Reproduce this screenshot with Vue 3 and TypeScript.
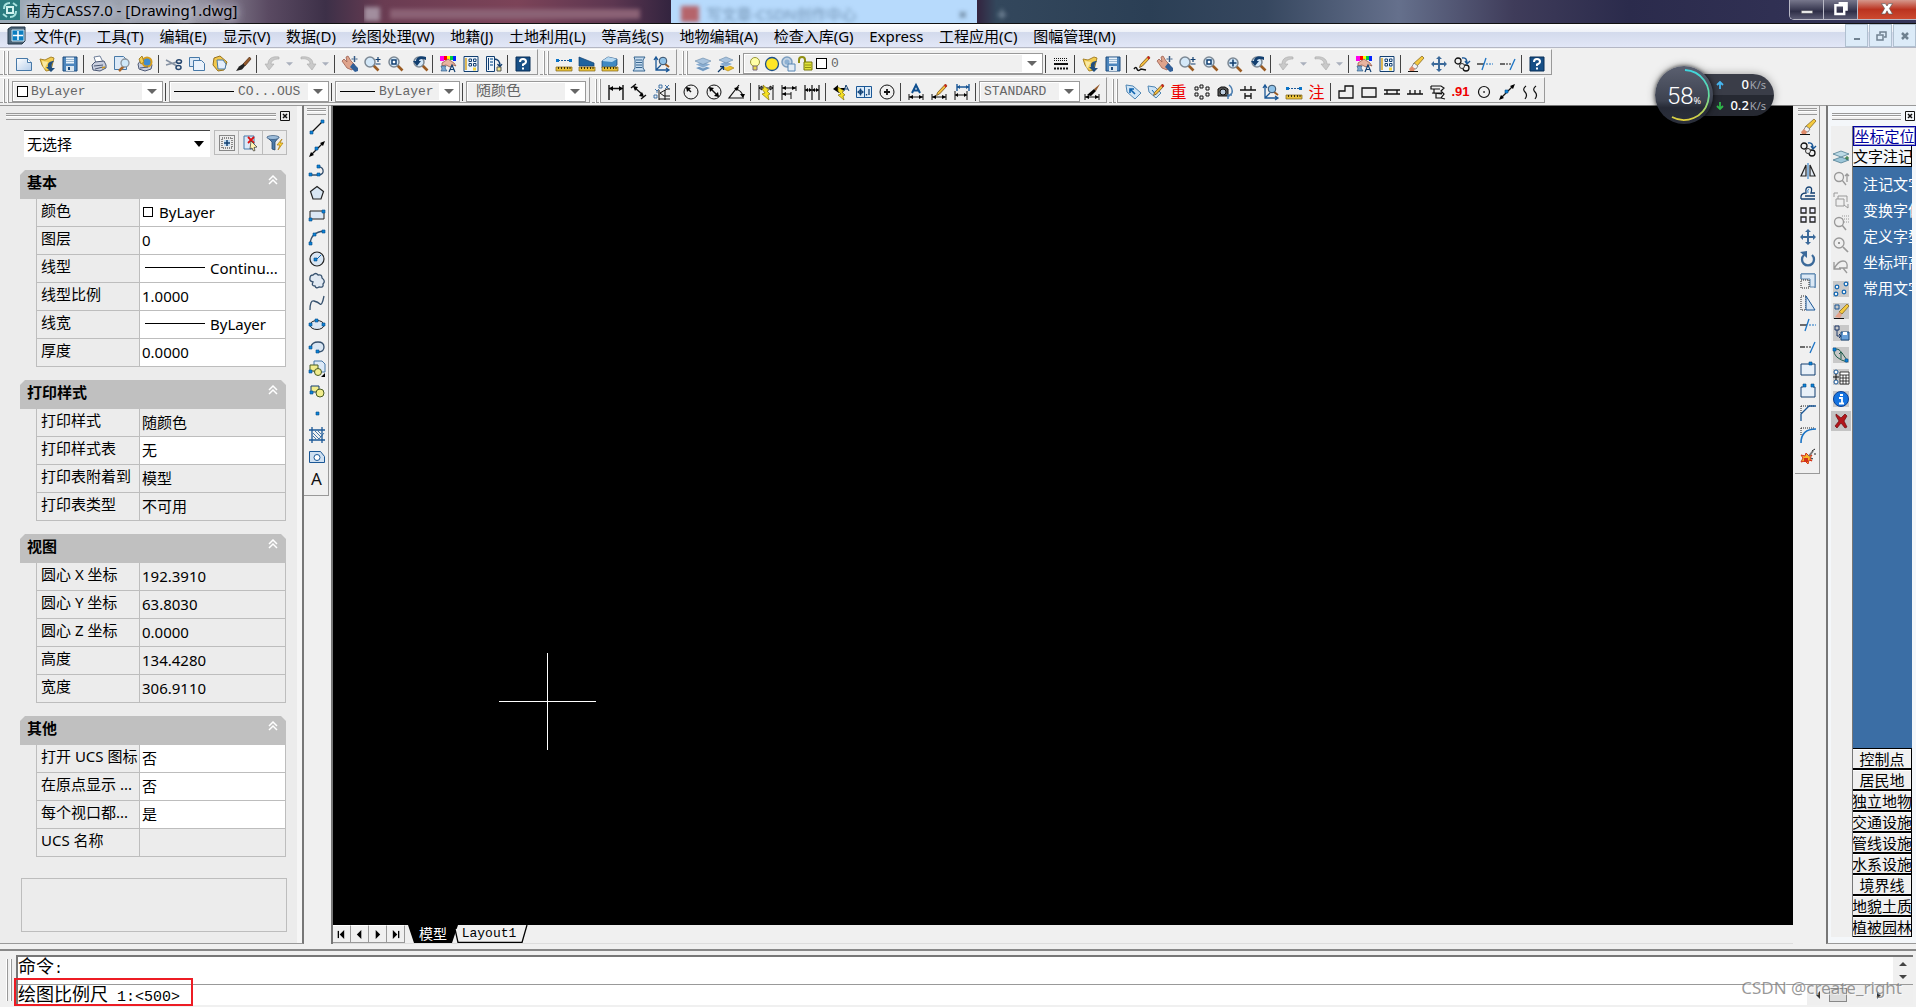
<script setup lang="ts">
import { ref } from 'vue'

interface Field { label: string; value: string; white?: boolean; mark?: 'box' | 'line' }
interface Section { title: string; fields: Field[] }
interface Combo { value: string; kind: string; options: string[] }

const menus = ['文件(F)', '工具(T)', '编辑(E)', '显示(V)', '数据(D)', '绘图处理(W)', '地籍(J)', '土地利用(L)', '等高线(S)', '地物编辑(A)', '检查入库(G)', 'Express', '工程应用(C)', '图幅管理(M)']

const combos: Record<string, Combo> = {
  layer: { value: '0', kind: 'layer', options: ['0'] },
  color: { value: 'ByLayer', kind: 'box', options: ['ByLayer', 'ByBlock'] },
  ltype: { value: 'CO...OUS', kind: 'long', options: ['CO...OUS', 'ByLayer'] },
  lweight: { value: 'ByLayer', kind: 'short', options: ['ByLayer', 'ByBlock'] },
  plot: { value: '随颜色', kind: 'plain', options: ['随颜色'] },
  dim: { value: 'STANDARD', kind: 'text', options: ['STANDARD'] },
}

const split = (s: string) => s.split(' ')
const toolbars = [
  [
    split('new open save | print preview publish | cut copy paste brush | undo v redo v | pan zoomrt zoomwin zoomprev | props dcenter palettes | help'),
    split('dist area region | list locate'),
    split('layers layerprev | @layer | lines | open save | pencil pan zoomrt zoomwin zoomall zoomprev | undo v redo v | props dcenter | erase move copyobj trim extend | help'),
  ],
  [
    split('@color | @ltype | @lweight | @plot'),
    split('dimlin dimali dimord | dimrad dimdia dimang | dimquick dimbase dimcont | leader tol center | dimtext dimedit dimupd | @dim dimstyle'),
    split('tag tagedit zhong ring camera tee locate dist zhu | poly rect rails comb scarp point91 circle seg squig'),
  ],
]

const drawTools = split('line xline pline polygon rectdot arc circ cloud spline ellipse earc insert block dot hatch regionbox mtext')
const editTools = split('erase copyobj mirror offset array move rotate scale stretch trim extend break1 break2 chamfer fillet explode')
const sideTools = split('g-layers g-zoom g-swap g-grid g-find g-back s-nodes s-erase s-save s-curve s-table info close')

const sections = ref<Section[]>([
  {
    title: '基本',
    fields: [
      { label: '颜色', value: 'ByLayer', white: true, mark: 'box' },
      { label: '图层', value: '0', white: true },
      { label: '线型', value: 'Continu...', white: true, mark: 'line' },
      { label: '线型比例', value: '1.0000', white: true },
      { label: '线宽', value: 'ByLayer', white: true, mark: 'line' },
      { label: '厚度', value: '0.0000', white: true },
    ],
  },
  {
    title: '打印样式',
    fields: [
      { label: '打印样式', value: '随颜色' },
      { label: '打印样式表', value: '无', white: true },
      { label: '打印表附着到', value: '模型' },
      { label: '打印表类型', value: '不可用' },
    ],
  },
  {
    title: '视图',
    fields: [
      { label: '圆心 X 坐标', value: '192.3910' },
      { label: '圆心 Y 坐标', value: '63.8030' },
      { label: '圆心 Z 坐标', value: '0.0000' },
      { label: '高度', value: '134.4280' },
      { label: '宽度', value: '306.9110' },
    ],
  },
  {
    title: '其他',
    fields: [
      { label: '打开 UCS 图标', value: '否', white: true },
      { label: '在原点显示 ...', value: '否', white: true },
      { label: '每个视口都...', value: '是', white: true },
      { label: 'UCS 名称', value: '' },
    ],
  },
])

const paletteItems = ['注记文字', '变换字体', '定义字型', '坐标坪高', '常用文字']
const paletteGroups = ['控制点', '居民地', '独立地物', '交通设施', '管线设施', '水系设施', '境界线', '地貌土质', '植被园林']

const K = 'fill="none" stroke="#111"'
const B = 'fill="none" stroke="#1a5796"'
const sq = (x: number, y: number) => `<path d="M${x} ${y}h3v3h-3z" fill="#0a84d8" stroke="#064a86" stroke-width=".6"/>`
const lens = (cx = 6, cy = 6) => `<path d="M${cx + 3} ${cy + 3}l5.500 5.500" stroke="#9a5b22" stroke-width="2.600"/><circle cx="${cx}" cy="${cy}" r="5" fill="#d4e8f8" stroke="#7c8894" stroke-width="1.500"/>`
const ruler = '<path d="M0 11h16v4H0z" fill="#e9c23a" stroke="#80611a" stroke-width=".7"/><path d="M2.500 11v2M5.500 11v2M8.500 11v2M11.500 11v2M14 11v2" stroke="#3a2c08"/>'
const pen = '<path d="M14.500 0L16 2l-7.500 8-3 1.500 1-3z" fill="#f3bd3c" stroke="#73501a" stroke-width=".8"/><path d="M13 1.500L14.500 0 16 2l-1.500 1.500z" fill="#c22"/>'
const grid = (x: number) => `<path d="M${x} .5h14v15h-14z" fill="#eef5fc" stroke="#123f70"/><path d="M${x + 2} 2v12" stroke="#d9a520" stroke-width="1.500"/><path d="M${x + 5} 3h2.500v2.500h-2.500zM${x + 9.500} 3h2.500v2.500h-2.500zM${x + 5} 7.500h2.500v2.500h-2.500zM${x + 9.500} 7.500h2.500v2.500h-2.500z" fill="none" stroke="#123f70"/><path d="M${x + 9} 11.500h3v3h-3z" fill="#f3d23c"/>`
const plate = '<path d="M0 0h16v16H0z" fill="#c8c8c8"/>'

const icons: Record<string, string> = {
  new: '<defs><linearGradient id="pg" x2="1" y2="1"><stop stop-color="#fff"/><stop offset="1" stop-color="#b4cdea"/></linearGradient></defs><path d="M.5 2.500h11l4 4v8H.5z" fill="url(#pg)" stroke="#4779a8"/><path d="M11.500 2.500v4h4" fill="#fff" stroke="#4779a8"/>',
  open: '<path d="M1 3l5 1 6-3 3 1-3 12-5 1L3 9z" fill="#f2cc50" stroke="#a8842a"/><path d="M3 5l6 1-4 7z" fill="#f9e9a3"/><path d="M15 5c-4 0-7 2-6 6H7l5 5 4-4h-3c-1-3 0-5 2-7z" fill="#214f7e"/>',
  save: '<path d="M1 1h14v14H1z" fill="#4d86bd" stroke="#1c4b7c"/><path d="M4 1.500h8v6H4z" fill="#eaf3fb"/><path d="M4 3.500h8M4 5.500h8" stroke="#9db9d2"/><path d="M4 10h8v5H4z" fill="#dbe6ef"/><path d="M6 11h2v3H6z" fill="#1c4b7c"/>',
  print: '<path d="M3 1l6-1 3 6-7 1z" fill="#fff" stroke="#6f7f9a"/><path d="M1 9l3-3 9-1 2 4v3l-6 3-7-1z" fill="#c9cfdf" stroke="#4b5874"/><path d="M3 10l9-1M4 13l8-2" stroke="#4b5874"/><path d="M11 12l3-1" stroke="#c92" stroke-width="1.500"/>',
  preview: '<path d="M.5.500h9l3 3v10H.5z" fill="#dce9f7" stroke="#4779a8"/><path d="M10 10l-5 5" stroke="#a8662a" stroke-width="2.500"/><circle cx="11" cy="7" r="4" fill="#cfe8f8" stroke="#8a939c" stroke-width="1.300"/>',
  publish: '<path d="M1 8l3-4 8-1 3 6-1 4-6 2-6-2z" fill="#c9cfdf" stroke="#4b5874"/><circle cx="10" cy="6" r="4.500" fill="#3d8bd0" stroke="#d79d1c" stroke-width="2"/><path d="M2 3l3-3 2 6-3 2z" fill="#f2cc50" stroke="#a8842a"/><path d="M3 12l8-1" stroke="#4b5874"/>',
  cut: '<path d="M0 4l11 6M0 9l11-3" stroke="#8591a2" stroke-width="1.500"/><ellipse cx="13" cy="5.500" rx="2.500" ry="1.800" fill="none" stroke="#26466e" stroke-width="1.500"/><ellipse cx="12.500" cy="11.500" rx="2.500" ry="2" fill="none" stroke="#26466e" stroke-width="1.500"/>',
  copy: '<path d="M.5 1.500h10v9H.5z" fill="#dce9f7" stroke="#4779a8"/><path d="M4.500 4.500h8l3 3v7h-11z" fill="#eaf2fb" stroke="#4779a8"/>',
  paste: '<path d="M2 2l6-2 7 6-3 8-6 1-5-6z" fill="#f1c84c" stroke="#96701c"/><path d="M5 4h6l3 4-1 5H6z" fill="#e4eefb" stroke="#4779a8"/>',
  brush: '<path d="M14.500 1L8 8l2 2 6-7z" fill="#93592b" stroke="#4a2a12" stroke-width=".7"/><path d="M8.500 7.500L4 10.500 1 15l6-1.500 3-3.500z" fill="#222"/>',
  pencil: '<path d="M0 13q2-3 3 0t4 0l5 1" fill="none" stroke="#111" stroke-width="1.500"/>' + pen,
  undo: '<path d="M15 1C9 0 4 2 4 8H1l4 6 5-6H7c0-3 3-5 8-5z" fill="#c9c9c9" stroke="#aaa" stroke-width=".6"/>',
  redo: '<path d="M1 3c5-1 9 1 9 5H7l5 6 4-6h-3C13 2 7 0 1 1z" fill="#c9c9c9" stroke="#aaa" stroke-width=".6"/>',
  pan: '<path d="M0 5l2-2 3 3-1-5 2-1 3 5 4 4-3 5-5-2z" fill="#dfa48c" stroke="#9d5f50" stroke-width=".8"/><path d="M8 11l3-4 5 5v3l-3 1z" fill="#315f98"/><path d="M12.500 0v6M9.500 3h6M11.500 1h2M11.500 5h2" stroke="#2a527f" stroke-width=".9"/>',
  zoomrt: lens(5, 6) + '<path d="M13 1v5M10.500 3.500h5M10.500 8h5" stroke="#123f70" stroke-width="1.200"/>',
  zoomwin: lens() + '<path d="M4 4h4v4H4z" fill="#fff" stroke="#123f70" stroke-width="1.500"/>',
  zoomall: lens(7, 7) + '<path d="M7 3.500v7M3.500 7h7" stroke="#123f70" stroke-width="1.600"/>',
  zoomprev: lens(8, 6) + '<path d="M15 1C10-1 5 1 5 5H2l4 5 4-5H8c0-2 3-3 7-1z" fill="#123f70"/>',
  props: '<path d="M0 0h4v5H0z" fill="#f0e"/><path d="M4 0h3v4H4z" fill="#f00"/><path d="M7 0h3v3H7z" fill="#ff0"/><path d="M10 0h3v4h-3z" fill="#0c4"/><path d="M13 0h3v5h-3z" fill="#02f"/><path d="M2 7l6-4 6 4 2 3-3-1-3 2-4-2-4 1z" fill="#e8b4a0" stroke="#8a4a3a" stroke-width=".7"/><path d="M1 10h5l-1 2 2 3H1l1-2z" fill="#7ba9d2" stroke="#26517c" stroke-width=".6"/><path d="M9 16l3-7 3 7M10 13.500h4" fill="none" stroke="#123f70" stroke-width="1.200"/>',
  dcenter: grid(1),
  palettes: '<path d="M.5.500h8v15h-8z" fill="#eef5fc" stroke="#123f70"/><path d="M2.500 2v12" stroke="#123f70"/><path d="M4 3h3M4 6h3M4 9h3" stroke="#4779a8" stroke-width="1.500"/><path d="M8 3q6 0 6 7M11.500 8l2.500 3 2-3" fill="none" stroke="#123f70" stroke-width="1.300"/><path d="M11 11h4v4h-4z" fill="#f3e98c" stroke="#555"/>',
  help: '<path d="M1 1h14v14H1z" fill="#174f86" stroke="#092f57"/><path d="M5 6q0-3 3-3t3 2.500q0 2-3 3v1.500M8 11.500v2" fill="none" stroke="#fff" stroke-width="2"/>',
  dist: '<path d="M2 4.500h12" stroke="#1a5796" stroke-dasharray="2 1"/><path d="M0 3h3v3H0zM13 3h3v3h-3z" fill="#0a74c8"/>' + ruler,
  area: '<path d="M0 1l15 6v3H0z" fill="#1d639e" stroke="#123f70" stroke-width=".7"/>' + ruler,
  region: '<path d="M0 5l6-4 9 2v6l-4 3H0z" fill="#4089c2" stroke="#123f70" stroke-width=".7"/><path d="M0 5l6-4 9 2-5 3z" fill="#b6d9f2"/>' + ruler,
  list: '<path d="M3 1h11l-2 3v8l2 3H2l2-3V4z" fill="#c6dcef" stroke="#37658f"/><path d="M5 4h6M5 6.500h6M5 9h6M5 11.500h6" stroke="#37658f"/>',
  locate: '<path d="M2 1v13h13M0 4l2-3 2 3M12 12l3 2-3 2M2 14l5-5" fill="none" stroke="#1a5796" stroke-width="1.300"/><path d="M11 8l4 3" stroke="#9a5b22" stroke-width="2"/><circle cx="9" cy="5" r="3.800" fill="#8fc2e8" stroke="#344c66"/>',
  layers: '<path d="M0 12l8-3 8 3-8 3.500z" fill="#6f97bf" stroke="#fff" stroke-width=".6"/><path d="M0 8.500l8-3 8 3-8 3.500z" fill="#88acd0" stroke="#fff" stroke-width=".6"/><path d="M0 5l8-3 8 3-8 3.500z" fill="#a8c3de" stroke="#6788a8" stroke-width=".6"/>',
  layerprev: '<path d="M4 12l6-3 6 3-6 3z" fill="#f0c32c" stroke="#a27c10" stroke-width=".6"/><path d="M1 8l7-3 7 3-7 3z" fill="#88acd0" stroke="#fff" stroke-width=".6"/><path d="M1 4l7-3 7 3-7 3z" fill="#a8c3de" stroke="#6788a8" stroke-width=".6"/><path d="M0 16l5-5M2 10.500h3.500V14" fill="none" stroke="#0b3767" stroke-width="1.300"/>',
  lines: '<path d="M1 2.500h14M1 4.500h14" stroke="#111" stroke-dasharray="1 1"/><path d="M1 8h14" stroke="#111" stroke-width="2"/><path d="M1 12.500h14" stroke="#111" stroke-width="2" stroke-dasharray="2 1"/>',
  bulb: '<circle cx="8" cy="6" r="4.500" fill="#ffffa8" stroke="#999536"/><path d="M6 10h4v4H6z" fill="#e8d84a" stroke="#767"/>',
  sun: '<circle cx="8" cy="8" r="6.500" fill="#ffe626" stroke="#1d4f88" stroke-width="1.300"/>',
  sungray: '<circle cx="6" cy="6" r="5" fill="#c2d3e4" stroke="#7b9dbf" stroke-width="1.500"/><circle cx="6" cy="6" r="2.500" fill="#8db0d2"/><path d="M7 8h7v7H7z" fill="#e3ecf5" stroke="#5887b5"/>',
  lock: '<path d="M1 7V4q0-3 3-3t3 3v4" fill="none" stroke="#8f8e12" stroke-width="2"/><path d="M6 6h8v8H6z" fill="#dfe23a" stroke="#76760e"/><path d="M7 9h6M7 11.500h6" stroke="#8f8e12"/>',
  dimlin: `<path d="M1 1v15M15 1v15M1 4.500h14" ${K} stroke-width="1.400"/><path d="M5 2v5L1 4.500zM11 2v5l4-2.500z"/>`,
  dimali: `<path d="M0 4l5-4M10 15l5-4M3 3l9 8" ${K} stroke-width="1.400"/><path d="M2 2l5 1-3 4zM13 13l-5-1 3-4z"/>`,
  dimord: `<path d="M5 16V6M11 16V6M5 15h11M6 9l7-4h3M6 9l4 3h6" ${K}/><path d="M1 5l2 2 2-2M3 7v2M11 1l4 4M15 1l-4 4M5 1h3v3H5zM0 11h3v3H0z" ${B} stroke-width=".8"/>`,
  dimrad: `<circle cx="8" cy="8" r="7" ${K}/><path d="M8 8L4 4" ${K} stroke-width="1.500"/><path d="M3 3l5 1-4 4z"/>`,
  dimdia: `<circle cx="8" cy="8" r="7" ${K}/><path d="M4 4l8 8" ${K} stroke-width="1.500"/><path d="M3 3l5 1-4 4zM13 13l-5-1 4-4z"/>`,
  dimang: `<path d="M10 1L0 14h15M6 5q7 1 8 8" ${K} stroke-width="1.200"/><path d="M5 4l5-1-2 4zM14 14l-3-4h5z"/>`,
  dimquick: `<path d="M1 1v15M15 1v15M1 4h14M1 4l3-2v4zM15 4l-3-2v4z" ${K}/><path d="M5 1l6 5-2 1 3 3-2 1 1 5-7-6 3-1-3-4 2-1z" fill="#f4df22" stroke="#85720a" stroke-width=".7"/>`,
  dimbase: `<path d="M1 1v15M1 4h14M1 10h9M10 8v7M15 2v5" ${K}/><path d="M5 2v4L1 4zM11 2v4l4-2zM5 8v4l-4-2z"/>`,
  dimcont: `<path d="M1 1v15M8 1v15M15 1v15M1 6h14" ${K} stroke-width="1.200"/><path d="M4 4v4L1 6zM5 4v4l3-2zM11 4v4L8 6zM12 4v4l3-2z"/>`,
  leader: '<path d="M0 5l5-4v3h7v2H6v3z"/><path d="M5 3l6 4-2 1 3 3-2 1 1 4-6-5 3-1-3-3z" fill="#f4df22" stroke="#85720a" stroke-width=".7"/><path d="M11 7l2-6 3 6M12 5h3" fill="none" stroke="#123f70"/>',
  tol: '<path d="M.5 2.500h15v11H.5zM8.500 2.500v11" fill="#dcebf8" stroke="#1a5796"/><circle cx="4.500" cy="8" r="2" fill="none" stroke="#1a5796"/><path d="M4.500 4.500v7M1.500 8h6M13 5v6M10.500 10v1.500" stroke="#123f70" stroke-width="1.300"/>',
  center: `<circle cx="8" cy="8" r="7" ${K}/><path d="M8 5v6M5 8h6" ${K} stroke-width="1.800"/>`,
  dimtext: `<path d="M4 9l4-8 4 8M5.500 6.500h5" fill="none" stroke="#0e4f90" stroke-width="2"/><path d="M1 10v6M15 10v6M1 13h14" ${K}/><path d="M5 11v4l-4-2zM11 11v4l4-2z"/>`,
  dimedit: `<path d="M1 10v6M15 10v6M1 13h14" ${K}/><path d="M5 11v4l-4-2zM11 11v4l4-2z"/>` + pen,
  dimupd: `<path d="M3 0v7M15 0v7M3 3h12" ${B} stroke-width="1.400"/><path d="M6 1v4L3 3zM12 1v4l3-2z" fill="#1a5796"/><path d="M1 7v9M13 7v9M1 11h12" ${K}/><path d="M4 9v4l-3-2zM10 9v4l3-2z"/>`,
  dimstyle: `<path d="M1 10v6M15 10v6M1 13h14" ${K}/><path d="M5 11v4l-4-2zM11 11v4l4-2z"/><path d="M16 0l-6 5 2 2z" fill="#93592b"/><path d="M10 5L3 11l4 1 5-5z"/>`,
  tag: '<path d="M1 1l7 1 8 7-6 6-8-7z" fill="#cfe4f5" stroke="#4f86b4"/><path d="M5 5l5 5M5 9V5h4" fill="none" stroke="#0d62ae" stroke-width="1.600"/>',
  tagedit: '<path d="M0 2l7 1 6 6-5 5-7-6z" fill="#cfe4f5" stroke="#4f86b4"/><path d="M4 6l4 5" stroke="#0d62ae"/>' + pen,
  ring: `<path d="M6 1h3v3H6zM2 3h2v3H1V3zM12 3h3v3h-3zM1 9h3v3H1zM12 9h3v3h-3zM6 12h3v3H6z" ${K}/>`,
  camera: '<path d="M1 5l3-2h4l3 2v7H1z" fill="#555" stroke="#111"/><circle cx="6" cy="8" r="3" fill="#bcd" stroke="#111"/><path d="M12 1q4 3 3 8l-4 4M11 15V11h4" fill="none" stroke="#4a7db0" stroke-width="1.500"/>',
  tee: `<path d="M0 6h16M5 2v4M11 2v4M5 9v6M11 9v6M5 12h6" ${K} stroke-width="1.300"/>`,
  poly: `<path d="M1 14V7h6V2h8v12z" ${K} stroke-width="1.300"/>`,
  rect: `<path d="M1 4h14v9H1z" ${K} stroke-width="1.300"/>`,
  rails: `<path d="M0 6h16M0 10h16M3 6v4M13 6v4" ${K} stroke-width="1.300"/>`,
  comb: `<path d="M0 10h16M3 6v4M8 6v4M13 6v4" ${K} stroke-width="1.300"/>`,
  scarp: `<path d="M1 2h10l3 2-3 3 3 3-3 4 4 1M1 2v3h9M4 5v4h8M2 9l10 1M6 10v4h5" ${K} stroke-width="1.200"/>`,
  circle: `<circle cx="8" cy="8" r="5.500" ${K} stroke-width="1.200"/><path d="M7.300 7.300h1.500v1.500H7.300z"/>`,
  seg: `<path d="M2 14L14 2" ${K} stroke-width="1.300"/><path d="M0 16l2-5 3 3zM16 0l-5 2 3 3z"/>` + sq(6, 6),
  squig: `<path d="M4 2Q0 5 3 8t0 7M14 2q-4 3-1 6t0 7" ${K} stroke-width="1.200"/>`,
  line: `<path d="M2 14L14 2" ${K} stroke-width="1.300"/>` + sq(1, 12) + sq(12, 1),
  xline: `<path d="M2 14L14 2" ${K} stroke-width="1.300"/><path d="M0 16l2-5 3 3zM16 0l-5 2 3 3z"/>` + sq(6, 6),
  pline: `<path d="M2 12h8q5-1 4-5-1-4-6-3" fill="none" stroke="#36516e" stroke-width="1.300"/>` + sq(0, 10) + sq(8, 10) + sq(8, 2),
  polygon: '<path d="M8 1.500l6.500 5L12 14H4L1.500 6.500z" fill="#d9e6f3" stroke="#222" stroke-width="1.200"/>',
  rectdot: '<path d="M1 4h14v8H1z" fill="#dce8f5" stroke="#222"/>' + sq(0, 11) + sq(13, 3),
  arc: '<path d="M1 15Q2 3 15 2" fill="none" stroke="#36516e" stroke-width="1.300"/>' + sq(0, 13) + sq(4, 4) + sq(13, 1),
  circ: '<circle cx="8" cy="8" r="7" fill="#d9e6f3" stroke="#222" stroke-width="1.200"/><path d="M7 9l5-5" stroke="#1268b4"/>' + sq(5, 7),
  cloud: '<path d="M4 2q3-3 5 0 4-1 4 3 4 3 1 6 1 4-4 3-3 2-4-1-4 0-2-4-4-1-3-4 0-3 3-3z" fill="#e1e9f2" stroke="#36516e" stroke-width="1.300"/>',
  spline: '<path d="M1 15Q1 5 5 6t6 3 4-8" fill="none" stroke="#36516e" stroke-width="1.300"/>',
  ellipse: '<ellipse cx="8" cy="8" rx="7" ry="4.500" fill="#d9e6f3" stroke="#222"/>' + sq(0, 6) + sq(13, 6) + sq(6, 2),
  earc: '<path d="M2 8Q3 3 9 3t6 5-6 5" fill="#d9e6f3" stroke="#36516e" stroke-width="1.300"/>' + sq(0, 7) + sq(7, 11),
  insert: '<path d="M5 0h8l3 3v8H5z" fill="#dce9f7" stroke="#4779a8"/><path d="M1 4h8v6H1z" fill="#f1ec8c" stroke="#4a5d22"/><circle cx="9" cy="11" r="3.500" fill="#f1ec8c" stroke="#4a5d22"/>' + sq(0, 9) + '<path d="M16 12v4h-4z"/>',
  block: '<path d="M2 3h8v6H2z" fill="#f1ec8c" stroke="#123f70"/><circle cx="11" cy="10" r="4" fill="#f1ec8c" stroke="#4a5d22"/>' + sq(1, 8),
  dot: sq(7, 7),
  hatch: `<path d="M3 0v16M13 0v16M0 3h16M0 13h16" ${B} stroke-width="1.300"/><path d="M4 6l6 6M4 9l3 3M6 4l6 6M9 4l3 3M10 12l5-6" ${B} stroke-width=".8"/>`,
  regionbox: '<path d="M.5 2.500h11l4 5v6H.5z" fill="#cfe0f1" stroke="#1a5796"/><circle cx="8" cy="8.500" r="3" fill="#fff" stroke="#1a5796"/>',
  erase: '<path d="M14 0l2 2-7 8-4-2z" fill="#f4c93f" stroke="#7b5b14" stroke-width=".7"/><path d="M6 7l4 3-2 3-5-1z" fill="#f1f1f4" stroke="#666" stroke-width=".7"/><path d="M1 13l3-3 3 3-1 2H2z" fill="#df8b6a"/><path d="M0 15.500h10" stroke="#111"/>',
  move: '<path d="M8 0l3 3H9v4h4V5l3 3-3 3V9H9v4h2l-3 3-3-3h2V9H3v2L0 8l3-3v2h4V3H5z" fill="#3c6a9a"/>',
  copyobj: `<circle cx="4" cy="5" r="3" ${K} stroke-width="1.300"/><circle cx="12" cy="12" r="3" ${K} stroke-width="1.300"/><circle cx="8" cy="10" r="2.500" fill="#eee" stroke="#333"/><path d="M8 2q5-1 5 5M11 5l2 3 3-3" ${B} stroke-width="1.400"/>`,
  trim: '<path d="M0 8h7" stroke="#222" stroke-width="1.300"/><path d="M9 8h7" stroke="#1b73c4" stroke-dasharray="2 1"/><path d="M5 14l4-12" stroke="#1b73c4" stroke-width="1.300"/>',
  extend: '<path d="M0 8h5" stroke="#222" stroke-width="1.300"/><path d="M6 8h6" stroke="#222" stroke-dasharray="2 1"/><path d="M10 14l5-11" stroke="#1b73c4" stroke-width="1.300"/>',
  mirror: '<path d="M6 2v11H1zM10 2v11h5z" fill="#e1e9f2" stroke="#222" stroke-width="1.200"/><path d="M8 0v16" stroke="#1b73c4"/>',
  offset: '<path d="M1 14q-1-6 5-6-1-6 3-6 4 0 2 6h4M1 14h14M5 11h10" fill="none" stroke="#123f70" stroke-width="1.300"/><path d="M8 8q-1-4 1-4" fill="none" stroke="#3c8bd0"/>',
  array: `<path d="M1 1h5v5H1zM10 1h5v5h-5zM1 10h5v5H1zM10 10h5v5h-5z" fill="#eef" stroke="#222" stroke-width="1.300"/>`,
  rotate: '<path d="M4 4a6 6 0 1 0 8 0" fill="none" stroke="#3c6a9a" stroke-width="2.300"/><path d="M0 1l7-1v7z" fill="#3c6a9a"/>',
  scale: '<path d="M1 1h14v14" fill="none" stroke="#1a5796"/><path d="M1 1v5M1 1h14v13H10V6H1z" fill="#dbe8f5" stroke="#5b85ad"/><path d="M1 7h8v8H1z" fill="none" stroke="#222" stroke-dasharray="1 1"/>',
  stretch: '<path d="M1 1h5v14H1z" fill="none" stroke="#222" stroke-dasharray="1 1"/><path d="M6 1l9 14H6z" fill="#dbe8f5" stroke="#1a5796"/>',
  break1: '<path d="M1 3h14v11H1z" fill="#e8f0f8" stroke="#123f70"/>' + sq(9, 1),
  break2: '<path d="M3 4H1v10h14V4h-2" fill="#e8f0f8" stroke="#123f70"/>' + sq(3, 1) + sq(11, 1),
  chamfer: '<path d="M1 1h14M1 1v8" stroke="#222" stroke-dasharray="1 1"/><path d="M1 16V9l8-8h7" fill="none" stroke="#1a5796" stroke-width="1.300"/>',
  fillet: '<path d="M1 1h14M1 1v8" stroke="#222" stroke-dasharray="1 1"/><path d="M1 16q0-14 15-14" fill="none" stroke="#1b73c4" stroke-width="1.600"/>',
  explode: '<path d="M1 6l4 1 1-3 3 3 3-1-2 3 2 3-3-1-1 4-3-3-4 1 2-4z" fill="#f5b52a" stroke="#d3321a"/><path d="M9 7l4-5" stroke="#777" stroke-width="2"/><path d="M12 2l3-2M14 5h2M11 9l2 1" stroke="#222"/><path d="M4 9h4v4H4z" fill="#d3321a"/>',
  'g-layers': '<path d="M0 11l8-3 8 3-8 3z" fill="#9cc6d8" stroke="#3f7187" stroke-width=".7"/><path d="M0 5l8-3 8 3-8 3z" fill="#bcdae6" stroke="#3f7187" stroke-width=".7"/><path d="M14 7v4M12 9h4" stroke="#186a2d"/>',
  'g-zoom': '<circle cx="6" cy="6" r="4.500" fill="none" stroke="#999" stroke-width="1.300"/><path d="M9 9l4 5M14 3v8M12 5l2-2 2 2" fill="none" stroke="#999" stroke-width="1.300"/>',
  'g-swap': '<path d="M5 3h9v6M3 6h8v7H3zM5 3v3M1 4V0h4M11 12l4 3v-4" fill="none" stroke="#999"/>',
  'g-grid': '<circle cx="6" cy="7" r="4.500" fill="none" stroke="#999" stroke-width="1.300"/><path d="M9 10l4 5" stroke="#999" stroke-width="1.500"/><path d="M9 1h7M9 4h7M11 7h5" stroke="#999" stroke-dasharray="1 1"/>',
  'g-find': '<circle cx="6" cy="6" r="5" fill="none" stroke="#999" stroke-width="1.300"/><path d="M10 10l5 5" stroke="#999" stroke-width="1.700"/><path d="M5 5h2v2H5z" fill="#999"/>',
  'g-back': '<path d="M1 3v7h7M1 10q4-8 9-8t4 7H6M10 9l4 5" fill="none" stroke="#999" stroke-width="1.300"/>',
  's-nodes': plate + '<g fill="#fff" stroke="#1769b2" stroke-width="1.300"><circle cx="4" cy="6" r="1.800"/><circle cx="13" cy="3" r="1.800"/><circle cx="3" cy="13" r="1.800"/><circle cx="11" cy="11" r="1.800"/></g>',
  's-erase': plate + '<path d="M2 2h4v4H2z" fill="none" stroke="#1a5796"/><path d="M14 1l2 2-7 8-3-2z" fill="#f4c93f" stroke="#7b5b14" stroke-width=".7"/><path d="M2 14l4-5 3 3-2 3z" fill="#e6a18a"/><path d="M1 15.500h10" stroke="#111"/>',
  's-save': plate + '<path d="M2 1h4v4H2zM4 5v6h4M6 9l2 2-2 2" fill="none" stroke="#1a3768"/><path d="M8 7h8v8H8z" fill="#69a0d8" stroke="#1c4b7c"/><path d="M10 7h4v3h-4z" fill="#fff"/>',
  's-curve': plate + '<path d="M1 3q4-3 8 3t6 8M1 3q-1 8 13 12M8 5v7M6 7l2-2 2 2" fill="none" stroke="#205b4b"/>' + sq(0, 1) + sq(12, 12),
  's-table': plate + '<path d="M7 3h9v12H7zM7 6h9M10 6v9M13 6v9M7 9h9M7 12h9" fill="#fff" stroke="#111" stroke-width=".8"/><circle cx="3" cy="3" r="2" fill="#fff" stroke="#1a5796"/><circle cx="3" cy="13" r="2" fill="#fff" stroke="#1a5796"/><path d="M3 5v6M0 8h6" stroke="#111"/>',
  info: plate + '<circle cx="8" cy="8" r="7.500" fill="#1473e0" stroke="#0a3f94"/><path d="M7 4h3M6 7h3v5M6 12.500h5" fill="none" stroke="#fff" stroke-width="1.800"/>',
  close: '<path d="M3 1l5 4 4-4 2 2-3 5 3 6-2 1-4-5-4 5-2-2 4-5-3-5z" fill="#b3161b" stroke="#6d0a0d" stroke-width=".7"/>',
}
const letters: Record<string, string> = { zhong: '重', zhu: '注', point91: '.91', mtext: 'A' }
</script>

<template>
  <div class="app">
    <header class="title">
      <svg class="logo" viewBox="0 0 20 20"><path d="M0 0h20v20H0z" fill="#2b7c80" /><path d="M4 9q0-6 6-6M16 11q0 6-6 6M3 14l4 3M13 3l4 3" fill="none" stroke="#a9e3e0" stroke-width="2" /><path d="M7 7h6v6H7z" fill="none" stroke="#d2f3f0" stroke-width="2" /></svg>
      <h1>南方CASS7.0 - [Drawing1.dwg]</h1>
      <div class="ghost dim"><i></i><b></b></div>
      <div class="ghost tab"><i></i><span>写文章-CSDN创作中心</span><em>×</em></div>
      <div class="ghost plus">+</div>
      <div class="winbtns">
        <button aria-label="最小化"><svg viewBox="0 0 20 20"><path d="M3 11h14v3H3z" fill="#fff" stroke="#555" stroke-width=".6" /></svg></button>
        <button aria-label="还原"><svg viewBox="0 0 20 20"><path d="M7 1h10v10M3 4h11v11H3z" fill="none" stroke="#fff" stroke-width="3" /></svg></button>
        <button class="red" aria-label="关闭"><svg viewBox="0 0 20 20"><path d="M3 2h5l2 3 2-3h5l-4 6 4 7h-5l-2-4-2 4H3l4-7z" fill="#fff" stroke="#555" stroke-width=".8" /></svg></button>
      </div>
    </header>

    <nav class="menu">
      <svg class="doc" viewBox="0 0 20 20"><path d="M1 3l3-2h14v14l-3 3H1z" fill="#4b6478" stroke="#26394a" /><path d="M5 4h12v11H5z" fill="#0b7dc0" stroke="#cfe5f2" /><path d="M11 5v9M6 9.500h10" stroke="#fff" stroke-width="1.500" /></svg>
      <div class="items"><a v-for="m in menus" :key="m" href="#">{{ m }}</a></div>
      <div class="mdi">
        <button aria-label="最小化文档"><svg viewBox="0 0 16 16"><path d="M5 11h6" stroke="#6f8190" stroke-width="2" /></svg></button>
        <button aria-label="还原文档"><svg viewBox="0 0 16 16"><path d="M4 7h6v5H4zM7 6V4h6v5h-2" fill="none" stroke="#6f8190" stroke-width="1.500" /></svg></button>
        <button aria-label="关闭文档"><svg viewBox="0 0 16 16"><path d="M5 5l6 6M11 5l-6 6" stroke="#6f8190" stroke-width="2.500" /></svg></button>
      </div>
    </nav>

    <div v-for="(row, r) in toolbars" :key="r" class="toolrow">
      <div v-for="(bar, g) in row" :key="g" class="bar">
        <span class="grip"></span>
        <template v-for="(t, k) in bar" :key="k">
          <span v-if="t === '|'" class="sep"></span>
          <button v-else-if="t === 'v'" class="drop" aria-label="更多"><svg viewBox="0 0 8 4"><path d="M0 0h8L4 4z" fill="#aab0bd" /></svg></button>
          <label v-else-if="t[0] === '@'" class="combo" :class="t.slice(1)">
            <template v-if="combos[t.slice(1)].kind === 'layer'">
              <svg v-for="n in ['bulb', 'sun', 'sungray', 'lock']" :key="n" class="ic" viewBox="0 0 16 16" v-html="icons[n]" />
            </template>
            <i v-if="['layer', 'box'].includes(combos[t.slice(1)].kind)" class="swatch"></i>
            <i v-if="['long', 'short'].includes(combos[t.slice(1)].kind)" class="rule" :class="combos[t.slice(1)].kind"></i>
            <select v-model="combos[t.slice(1)].value" :aria-label="t.slice(1)">
              <option v-for="o in combos[t.slice(1)].options" :key="o">{{ o }}</option>
            </select>
            <span class="arrow"><svg viewBox="0 0 10 5"><path d="M0 0h10L5 5z" fill="#666" /></svg></span>
          </label>
          <button v-else class="tool" :aria-label="t">
            <span v-if="letters[t]" class="glyph" :class="t">{{ letters[t] }}</span>
            <svg v-else class="ic" viewBox="0 0 16 16" v-html="icons[t]" />
          </button>
        </template>
      </div>
    </div>

    <main class="work">
      <aside class="props">
        <div class="cap"><span class="hgrip"></span><button aria-label="关闭特性"><svg viewBox="0 0 10 10"><path d="M.5.500h9v9h-9z" fill="none" stroke="#111" /><path d="M3 3l4 4M7 3L3 7" stroke="#111" stroke-width="1.500" /></svg></button></div>
        <div class="pick">
          <label class="selbox"><select aria-label="选择"><option>无选择</option></select><svg viewBox="0 0 10 6"><path d="M0 0h10L5 6z" /></svg></label>
          <div class="trio">
            <button aria-label="快速选取"><svg class="ic" viewBox="0 0 16 16"><path d="M.5.500h15v15H.5zM3 3h10v10H3z" fill="none" stroke="#222" stroke-dasharray="1 1" /><path d="M5 5h6v6H5z" fill="#bcd9f2" /><path d="M8 5v6M5 8h6" stroke="#123f70" stroke-width="1.500" /></svg></button>
            <button aria-label="选择对象"><svg class="ic" viewBox="0 0 16 16"><path d="M1 1h10v13H1z" fill="#dce9f7" stroke="#4779a8" /><path d="M5 2l6 6M11 2L5 8" stroke="#d11" stroke-width="1.800" /><path d="M8 6l6 6-3 .5 1 3-1.500.5-1.500-3-2 1z" fill="#fff4b0" stroke="#333" stroke-width=".7" /></svg></button>
            <button aria-label="过滤"><svg class="ic" viewBox="0 0 16 16"><path d="M0 2h12L8 7v8l-3-1V7z" fill="#4c7aa8" stroke="#23476d" stroke-width=".8" /><ellipse cx="6" cy="2.500" rx="6" ry="2" fill="#9dbcd9" stroke="#23476d" stroke-width=".6" /><path d="M15 4l-5 6h3l-2 5 5-7h-3z" fill="#ffd83a" stroke="#ab7a0d" stroke-width=".7" /></svg></button>
          </div>
        </div>
        <section v-for="s in sections" :key="s.title">
          <h2>{{ s.title }}<svg viewBox="0 0 10 10"><path d="M1 5l4-4 4 4M1 9l4-4 4 4" fill="none" stroke="#fff" stroke-width="1.500" /></svg></h2>
          <table>
            <tbody>
              <tr v-for="(f, n) in s.fields" :key="f.label">
                <th scope="row"><label :for="s.title + n">{{ f.label }}</label></th>
                <td :class="{ white: f.white }">
                  <div>
                    <i v-if="f.mark === 'box'" class="pbox"></i>
                    <i v-if="f.mark === 'line'" class="pline"></i>
                    <input :id="s.title + n" v-model="f.value" type="text" :readonly="!f.white">
                  </div>
                </td>
              </tr>
            </tbody>
          </table>
        </section>
        <div class="hint"></div>
      </aside>

      <div class="dock left">
        <div class="strip">
          <span class="hgrip"></span>
          <button v-for="t in drawTools" :key="t" :aria-label="t">
            <span v-if="letters[t]" class="glyph" :class="t">{{ letters[t] }}</span>
            <svg v-else class="ic" viewBox="0 0 16 16" v-html="icons[t]" />
          </button>
        </div>
      </div>

      <div class="view">
        <div class="canvas"><div class="cross"></div></div>
        <div class="tabs">
          <button class="nav" aria-label="第一个"><svg viewBox="0 0 10 10"><path d="M1.500 1v8" stroke="#000" stroke-width="1.500" /><path d="M8 0v10L3 5z" /></svg></button>
          <button class="nav" aria-label="上一个"><svg viewBox="0 0 10 10"><path d="M7 0v10L2 5z" /></svg></button>
          <button class="nav" aria-label="下一个"><svg viewBox="0 0 10 10"><path d="M3 0v10l5-5z" /></svg></button>
          <button class="nav" aria-label="最后一个"><svg viewBox="0 0 10 10"><path d="M8.500 1v8" stroke="#000" stroke-width="1.500" /><path d="M2 0v10l5-5z" /></svg></button>
          <button class="tabm"><svg viewBox="0 0 50 18" preserveAspectRatio="none"><path d="M0 0h50l-6 18H6z" /></svg><span>模型</span></button>
          <button class="tabl"><svg viewBox="0 0 74 18" preserveAspectRatio="none"><path d="M1 4l3 13.500h64L73 0" fill="#f0f0f0" stroke="#000" stroke-width="1.300" /></svg><span>Layout1</span></button>
        </div>
      </div>

      <div class="dock right">
        <div class="strip">
          <span class="hgrip"></span>
          <button v-for="t in editTools" :key="t" :aria-label="t"><svg class="ic" viewBox="0 0 16 16" v-html="icons[t]" /></button>
        </div>
      </div>

      <aside class="side">
        <div class="cap"><span class="hgrip"></span><button aria-label="关闭屏幕菜单"><svg viewBox="0 0 10 10"><path d="M.5.500h9v9h-9z" fill="none" stroke="#111" /><path d="M3 3l4 4M7 3L3 7" stroke="#111" stroke-width="1.500" /></svg></button></div>
        <div class="sbody">
          <div class="scol">
            <button v-for="t in sideTools" :key="t" :class="{ hot: t === 'close' }" :aria-label="t"><svg class="ic" viewBox="0 0 16 16" v-html="icons[t]" /></button>
          </div>
          <div class="palette">
            <button class="coord">坐标定位</button>
            <button class="head">文字注记</button>
            <div class="list"><a v-for="p in paletteItems" :key="p" href="#">{{ p }}</a></div>
            <button v-for="p in paletteGroups" :key="p" class="grp"><span>{{ p }}</span></button>
          </div>
        </div>
      </aside>
    </main>

    <footer class="cmd">
      <span class="vgrip"></span>
      <div class="cbox">
        <div class="hist"><p>命令<span>:</span></p><div class="vs"><svg viewBox="0 0 8 4"><path d="M0 4h8L4 0z" fill="#444" /></svg><svg viewBox="0 0 8 4"><path d="M0 0h8L4 4z" fill="#444" /></svg></div></div>
        <div class="entry">
          <p>绘图比例尺<span> 1:&lt;500&gt;</span></p>
          <div class="hs"><svg viewBox="0 0 4 8"><path d="M4 0v8L0 4z" fill="#333" /></svg><i></i><svg class="r" viewBox="0 0 4 8"><path d="M0 0v8l4-4z" fill="#333" /></svg></div>
        </div>
      </div>
      <div class="mark"></div>
      <div class="water">CSDN @create_right</div>
    </footer>

    <div class="meter">
      <div class="pill">
        <p><svg viewBox="0 0 8 8"><path d="M4 8V1M1 4l3-3 3 3" fill="none" stroke="#46b6f0" stroke-width="1.800" /></svg><b>0</b><span>K/s</span></p>
        <p><svg viewBox="0 0 8 8"><path d="M4 0v7M1 4l3 3 3-3" fill="none" stroke="#2fb84a" stroke-width="1.800" /></svg><b>0.2</b><span>K/s</span></p>
      </div>
      <div class="dial">
        <svg viewBox="0 0 58 58">
          <defs><linearGradient id="ring" x1="0" y1="0" x2="0" y2="1"><stop stop-color="#3fd6e0" /><stop offset=".5" stop-color="#63dca0" /><stop offset="1" stop-color="#e0cf3c" /></linearGradient></defs>
          <path d="M30 4A25 25 0 1 1 17 51" fill="none" stroke="url(#ring)" stroke-width="1.800" />
        </svg>
        <span>58</span><small>%</small>
      </div>
    </div>
  </div>
</template>

<style>
html, body { margin: 0; overflow: hidden; }
</style>

<style scoped>
.app { position: relative; display: flex; flex-direction: column; height: 100vh; background: #f0f0f0; color: #000; font: 15px/20px "Noto Sans", "Noto Sans CJK SC", sans-serif; overflow: hidden; }
button, input, select { font: inherit; color: inherit; margin: 0; padding: 0; border: 0; background: none; border-radius: 0; }
button { display: flex; align-items: center; justify-content: center; flex: none; }
a { color: inherit; text-decoration: none; }
p, h1, h2 { margin: 0; }
svg { display: block; flex: none; }
.ic { width: 16px; height: 16px; overflow: visible; }

.title { position: relative; display: flex; align-items: flex-start; flex: none; height: 23px; border-bottom: 1px solid #111; background: linear-gradient(90deg, #9aa9b6 0, #9a9aa6 10%, #5a4a62 14%, #3d3048 17%, #6a3c52 20%, #7c4358 27%, #5c3650 32%, #33243f 35%, #33243f 51%, #33475c 52%, #2b3f55 60%, #36475f 66%, #65708c 73%, #3f3c5a 79%, #2b2b4c 85%, #35355a 100%); }
.logo { width: 20px; height: 20px; margin-right: 6px; }
h1 { font-size: 15px; font-weight: 400; line-height: 20px; text-shadow: 0 0 8px #dde, 0 0 8px #ccd; }
.ghost { position: absolute; top: 0; height: 23px; padding-top: 4px; box-sizing: border-box; display: flex; align-items: center; overflow: hidden; }
.ghost > * { filter: blur(2px); }
.dim { left: 19%; width: 15%; }
.dim i { width: 16px; height: 14px; background: #a28e9e; }
.dim b { width: 250px; height: 10px; margin-left: 10px; background: #8b6275; }
.tab { left: 35%; width: 16%; background: #b7dafc; padding-left: 10px; }
.tab i { width: 18px; height: 16px; background: #b5646b; }
.tab span { margin-left: 8px; color: #7090b0; }
.tab em { margin-left: auto; margin-right: 10px; color: #345; font-style: normal; }
.plus { left: 52%; color: #9ab; font-size: 20px; filter: blur(2px); }
.winbtns { position: absolute; right: 0; top: 0; display: flex; height: 19px; border: 1px solid #b9b9c6; border-top: 0; border-right: 0; border-bottom-left-radius: 5px; overflow: hidden; }
.winbtns button { width: 34px; background: linear-gradient(#77778c, #2f2f48 60%, #5a5a72); border-right: 1px solid #b9b9c6; }
.winbtns button.red { width: 58px; background: linear-gradient(#d5988c, #bb3320 50%, #cc4a30); border: 0; }
.winbtns svg { width: 18px; height: 16px; }

.menu { display: flex; align-items: center; flex: none; height: 23px; border-bottom: 1px solid #b4b7c4; background: linear-gradient(#fff, #eef1f8 35%, #d3daec 37%, #e2e7f7); padding-left: 7px; gap: 7px; white-space: nowrap; }
.items { display: flex; justify-content: space-between; width: 1082px; }
.doc { width: 20px; height: 20px; }
.mdi { display: flex; margin-left: auto; height: 23px; gap: 1px; }
.mdi button { width: 23px; border: 1px solid #b0c0d0; background: #dcebf8; box-sizing: border-box; }
.mdi svg { width: 16px; height: 16px; }

.toolrow { display: flex; flex: none; height: 28px; gap: 2px; }
.toolrow:nth-of-type(2) { height: 29px; }
.bar { display: flex; align-items: center; height: 26px; margin-top: 1px; box-sizing: border-box; padding: 3px 3px 0 0; border-top: 1px solid #fff; border-right: 1px solid #999; border-bottom: 1px solid #999; }
.grip { width: 12px; height: 24px; margin-top: -2px; box-sizing: border-box; flex: none; background: linear-gradient(90deg, transparent 3px, #fff 3px, #fff 4px, #999 4px, #999 5px, transparent 5px, transparent 7px, #fff 7px, #fff 8px, #999 8px, #999 9px, transparent 9px); }
.tool { width: 23px; height: 22px; }
.sep { width: 2px; height: 18px; margin: 0 2px; box-sizing: border-box; border-left: 1px solid #444; flex: none; }
.drop { width: 13px; height: 22px; }
.drop svg { width: 7px; height: 4px; }
.glyph { font-size: 16px; line-height: 16px; color: #e00; }
.glyph.point91 { font: bold 13px/16px "Liberation Sans", sans-serif; }
.glyph.mtext { color: #111; font-size: 17px; }
.combo { display: flex; align-items: center; height: 21px; box-sizing: border-box; border: 1px solid #999; background: #f0f0f0; box-shadow: inset 0 0 0 1px #fff; padding-left: 4px; color: #666; font: 13px/16px "Liberation Mono", "Noto Sans CJK SC", monospace; flex: none; }
.combo select { appearance: none; flex: 1; min-width: 0; height: 17px; }
.arrow { display: flex; align-items: center; justify-content: center; width: 20px; height: 19px; background: #fff; }
.arrow svg { width: 10px; height: 5px; }
.layer { width: 300px; gap: 1px; padding-left: 3px; }
.layer .swatch { margin-right: 3px; margin-left: 1px; }
.color { width: 151px; }
.ltype { width: 160px; }
.lweight { width: 125px; }
.plot { width: 120px; padding-left: 9px; font-size: 15px; }
.dim.combo { left: auto; width: 101px; }
.swatch { width: 9px; height: 9px; border: 1px solid #000; background: #fff; margin-right: 3px; flex: none; }
.rule { height: 1px; background: #000; margin-right: 4px; flex: none; }
.rule.long { width: 60px; }
.rule.short { width: 35px; }

.work { display: flex; flex: 1; min-height: 0; }
.props { width: 304px; flex: none; box-sizing: border-box; background: #ececec; border-top: 1px solid #999; border-right: 2px solid #777; border-bottom: 1px solid #999; box-shadow: inset -5px 0 0 #f6f6f6; }
.cap { display: flex; align-items: center; gap: 4px; padding: 4px 0 0 6px; height: 12px; }
.hgrip { display: block; border: 1px solid #999; border-width: 1px 0; box-shadow: 0 1px 0 #fff, 0 3px 0 #f0f0f0, 0 4px 0 #999; }
.cap .hgrip { width: 270px; height: 1px; margin-top: -3px; }
.cap button svg { width: 10px; height: 10px; }
.pick { display: flex; gap: 4px; margin: 8px 0 0 24px; }
.selbox { display: flex; align-items: center; width: 186px; height: 27px; background: #fff; border-top: 1px solid #444; box-sizing: border-box; padding: 0 6px 0 3px; }
.selbox select { appearance: none; flex: 1; }
.selbox svg { width: 10px; height: 6px; }
.trio { display: flex; height: 25px; box-sizing: border-box; border: 1px solid #bbb; border-right: 0; }
.trio button { width: 24px; border-right: 1px solid #bbb; box-sizing: border-box; }
section { margin: 13px 0 0 20px; width: 266px; }
h2 { display: flex; align-items: center; justify-content: space-between; height: 29px; box-sizing: border-box; padding: 0 8px 6px 7px; background: #c0c0c0; font-size: 15px; line-height: 20px; clip-path: polygon(0 5px, 5px 0, 261px 0, 266px 5px, 266px 100%, 0 100%); }
h2 svg { width: 10px; height: 10px; margin-top: -3px; }
table { width: 250px; margin-left: 16px; border-collapse: separate; border-spacing: 0; table-layout: fixed; border-left: 1px solid #bdbdbd; }
th, td { padding: 0; border-right: 1px solid #bdbdbd; border-bottom: 1px solid #bdbdbd; }
th { width: 98px; height: 21px; padding: 0 0 6px 4px; font-weight: 400; text-align: left; white-space: nowrap; line-height: 20px; }
td.white { background: #fff; }
td > div { display: flex; align-items: center; padding: 0 0 2px 2px; }
td input { flex: 1; min-width: 0; width: 0; height: 22px; }
.pbox { width: 8px; height: 8px; border: 1px solid #000; margin: 0 6px 0 1px; }
.pline { width: 60px; height: 1px; background: #000; margin: 0 5px 0 3px; }
.hint { margin: 21px 0 0 21px; width: 266px; height: 54px; box-sizing: border-box; border: 1px solid #bdbdbd; }

.dock { flex: none; width: 27px; border-top: 1px solid #999; }
.strip { display: flex; flex-direction: column; width: 25px; padding: 2px 0 5px 1px; box-sizing: border-box; border-right: 1px solid #999; border-bottom: 1px solid #999; }
.strip .hgrip { margin: 0 2px 5px; height: 1px; }
.strip button { width: 23px; height: 22px; }
.dock.right { width: 31px; padding-left: 2px; }
.view { display: flex; flex-direction: column; flex: 1; min-width: 0; border-left: 2px solid #777; }
.canvas { position: relative; flex: 1; background: #000; border-top: 1px solid #777; }
.cross { position: absolute; left: 166px; top: 547px; width: 97px; height: 97px; background: linear-gradient(#fff, #fff) 48px 0 / 1px 100% no-repeat, linear-gradient(#fff, #fff) 0 48px / 100% 1px no-repeat; }
.tabs { display: flex; height: 18px; flex: none; border-bottom: 1px solid #ddd; }
.nav { width: 18px; border-right: 1px solid #999; border-bottom: 1px solid #999; border-top: 1px solid #fff; box-sizing: border-box; }
.nav svg { width: 9px; height: 9px; }
.tabm, .tabl { display: grid; }
.tabm svg, .tabl svg, .tabm span, .tabl span { grid-area: 1 / 1; }
.tabm svg { width: 50px; height: 18px; }
.tabl svg { width: 74px; height: 18px; }
.tabm { margin-left: 3px; font-size: 14px; line-height: 18px; }
.tabm span { color: #fff; z-index: 1; }
.tabl { margin-left: -4px; font: 13px/18px "Liberation Mono", monospace; }
.tabl span { z-index: 1; padding-right: 4px; }

.side { display: flex; flex-direction: column; width: 90px; flex: none; box-sizing: border-box; background: #f4f7fa; border: 1px solid #999; border-left: 2px solid #777; border-right: 0; }
.side .cap { padding-left: 4px; }
.side .cap .hgrip { width: 69px; }
.sbody { display: flex; flex: 1; min-height: 0; padding: 4px 4px 6px 3px; }
.scol { display: flex; flex-direction: column; width: 21px; flex: none; padding-top: 20px; background: #efefef; }
.scol button { width: 20px; height: 22px; }
.scol .hot { height: 20px; margin-top: 1px; background: #c4c4c4; }
.palette { display: flex; flex-direction: column; width: 60px; flex: none; border-left: 1px solid #777; box-sizing: border-box; line-height: 18px; white-space: nowrap; }
.coord { width: 63px; height: 20px; border: 1px solid #0000a0; box-sizing: border-box; background: #fff; color: #0000a0; box-shadow: inset 0 0 0 1px #99c; }
.head { height: 21px; box-sizing: border-box; border-right: 1px solid #000; border-bottom: 1px solid #000; overflow: hidden; justify-content: flex-start; }
.list { flex: 1; display: flex; flex-direction: column; background: #3b6ea5; color: #fff; padding: 4px 0 0 10px; overflow: hidden; }
.list a { height: 26px; line-height: 26px; }
.grp { height: 21px; box-sizing: border-box; border: 1px solid #000; border-left: 0; overflow: hidden; background: #f0f0f0; box-shadow: inset 0 1px 0 #fff; }

.cmd { position: relative; display: flex; height: 58px; flex: none; margin-top: 5px; box-sizing: border-box; border-top: 2px solid #888; padding: 4px 3px 2px 6px; }
.vgrip { width: 7px; margin: 4px 3px 4px 0; box-sizing: border-box; background: linear-gradient(90deg, #fff 0 1px, #999 1px 2px, transparent 2px 4px, #fff 4px 5px, #999 5px 6px, transparent 6px); flex: none; }
.cbox { flex: 1; display: flex; flex-direction: column; background: #fff; border-top: 2px solid #777; border-left: 2px solid #777; font: 18px/16px "Noto Sans CJK SC", sans-serif; }
.cbox span { font: 15px/16px "Liberation Mono", monospace; white-space: pre; }
.hist { display: flex; height: 27px; border-bottom: 1px solid #999; }
.hist p, .entry p { flex: 1; height: 20px; }
.entry { display: flex; height: 20px; }
.vs { width: 20px; background: #f0f0f0; display: flex; flex-direction: column; justify-content: space-around; align-items: center; }
.vs svg { width: 8px; height: 4px; }
.hs { display: flex; align-items: center; width: 106px; background: #efefef; padding-left: 9px; box-sizing: border-box; }
.hs svg { width: 4px; height: 8px; }
.hs i { width: 18px; height: 14px; margin-left: 9px; border: 1px solid #888; background: #ddd; box-sizing: border-box; }
.hs .r { margin-left: 30px; }
.mark { position: absolute; left: 14px; top: 27px; width: 179px; height: 28px; box-sizing: border-box; border: 2px solid #ed1c24; }
.water { position: absolute; right: 14px; bottom: 7px; font-size: 17px; line-height: 24px; color: rgba(120, 120, 120, .75); text-shadow: 1px 1px 0 rgba(255, 255, 255, .6); }

.meter { position: absolute; top: 65px; right: 142px; display: flex; align-items: center; width: 119px; height: 60px; }
.pill { position: absolute; right: 0; top: 9px; width: 75px; height: 42px; border-radius: 0 21px 21px 0; background: linear-gradient(#3a3d48 50%, #262932 51%); box-shadow: 0 0 8px rgba(0, 0, 0, .35); box-sizing: border-box; padding-right: 8px; font-size: 13px; line-height: 21px; }
.pill p { display: flex; align-items: center; height: 21px; padding-left: 17px; }
.pill svg { width: 8px; height: 8px; }
.pill b { margin-left: auto; color: #fff; font-weight: 500; }
.pill span { color: #a2a5ae; font-size: 11px; margin-left: 1px; }
.dial { position: relative; display: flex; align-items: flex-end; justify-content: center; width: 58px; height: 58px; border-radius: 50%; background: linear-gradient(#5b6070, #3d4250 60%, #262a36 72%, #2b2f3b); box-shadow: 0 0 4px rgba(0, 0, 0, .7), 0 0 10px rgba(0, 0, 0, .3); color: #fff; }
.dial svg { position: absolute; inset: 0; width: 58px; height: 58px; }
.dial span { font: 300 24px/28px Roboto, sans-serif; padding-bottom: 14px; }
.dial small { font-size: 9px; line-height: 12px; padding-bottom: 17px; }
</style>
